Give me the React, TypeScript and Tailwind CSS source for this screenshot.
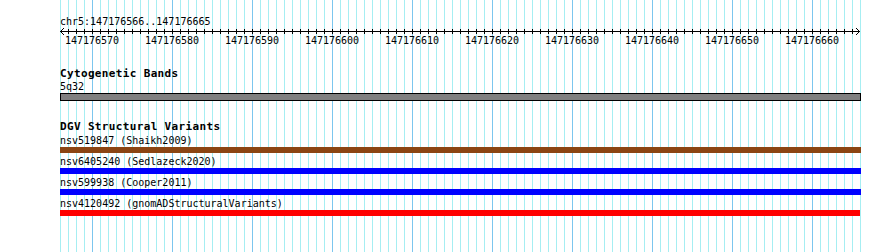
import React from 'react';

const TRACK_LEFT = 60;
const BASE_PX = 8;
const START = 147176566;
const END = 147176665;

const variants = [
  { id: 'nsv519847', source: 'Shaikh2009', color: 'bg-[#8b4513]', width: 'w-[801px]' },
  { id: 'nsv6405240', source: 'Sedlazeck2020', color: 'bg-[#0000ff]', width: 'w-[801px]' },
  { id: 'nsv599938', source: 'Cooper2011', color: 'bg-[#0000ff]', width: 'w-[801px]' },
  { id: 'nsv4120492', source: 'gnomADStructuralVariants', color: 'bg-[#ff0000]', width: 'w-[800px]' },
];

// vertical guide lines, one per base, darker every 10 bases
function GuideLines() {
  const lines = [];
  for (let k = 0; k <= END - START + 1; k++) {
    const x = TRACK_LEFT + k * BASE_PX + 0.5;
    const major = (START + k) % 10 === 0;
    lines.push(
      <line key={k} x1={x} y1={0} x2={x} y2={252} stroke={major ? '#7cc6ee' : '#a6eef2'} strokeWidth={1} />
    );
  }
  return (
    <svg className="absolute inset-0" width={890} height={252}>
      {lines}
    </svg>
  );
}

function Ruler() {
  const ticks = [];
  for (let k = 1; k < END - START + 1; k++) {
    const x = k * BASE_PX + 0.5;
    ticks.push(<line key={k} x1={x} y1={2} x2={x} y2={7} stroke="#000" strokeWidth={1} />);
  }
  const labels = [];
  for (let pos = START; pos <= END; pos++) {
    if (pos % 10 !== 0) continue;
    const x = (pos - START) * BASE_PX;
    labels.push(
      <text key={pos} x={x} y={17} textAnchor="middle" fontSize={10} fill="#000">
        {pos}
      </text>
    );
  }
  return (
    <svg width={801} height={20} className="block font-['DejaVu_Sans_Mono',monospace]">
      <line x1={0} y1={4.5} x2={800} y2={4.5} stroke="#000" strokeWidth={1} />
      <polyline points="4,1 0.5,4.5 4,8" fill="none" stroke="#000" strokeWidth={1} />
      <polyline points="796,1 799.5,4.5 796,8" fill="none" stroke="#000" strokeWidth={1} />
      {ticks}
      {labels}
    </svg>
  );
}

export default function App() {
  return (
    <div className="relative w-[890px] h-[252px] overflow-hidden bg-white text-black font-['DejaVu_Sans_Mono',monospace]">
      <GuideLines />
      <div className="relative flex flex-col pl-[60px] pt-[16px]">
        <div className="text-[10px] leading-[11px]">chr5:147176566..147176665</div>
        <Ruler />

        <div className="mt-[21px] text-[11px] leading-[11px] font-bold tracking-[0.35px]">Cytogenetic Bands</div>
        <div className="mt-[2px] text-[10px] leading-[11px]">5q32</div>
        <div className="mt-[1px] h-[8px] w-[801px] border border-black bg-[#808080]" />

        <div className="mt-[20px] text-[11px] leading-[11px] font-bold tracking-[0.35px]">DGV Structural Variants</div>
        {variants.map((v) => (
          <div key={v.id} className="flex flex-col">
            <div className="mt-[3px] text-[10px] leading-[11px]">
              {v.id} ({v.source})
            </div>
            <div className={`mt-[1px] h-[6px] ${v.width} ${v.color}`} />
          </div>
        ))}
      </div>
    </div>
  );
}
